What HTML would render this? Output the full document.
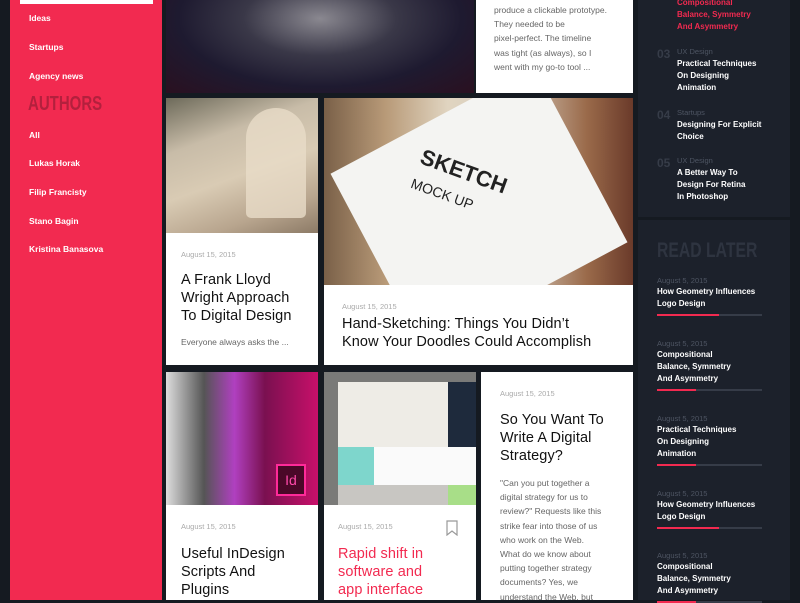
<!DOCTYPE html>
<html><head><meta charset="utf-8"><style>
*{margin:0;padding:0;box-sizing:border-box}
body{width:800px;height:600px;overflow:hidden;background:#151a21;font-family:"Liberation Sans",sans-serif;position:relative}
.abs{position:absolute}
.side{left:10px;top:0;width:152px;height:600px;background:#f22a50}
.side .it{position:absolute;left:19px;color:#fff;font-size:8.5px;font-weight:bold}
.auth{position:absolute;left:18px;top:93px;font-size:20px;font-weight:bold;color:#b3203d;transform:scaleX(.75);transform-origin:left}
.card{position:absolute;background:#fff;overflow:hidden}
.img{position:absolute;left:0;top:0;overflow:hidden}
.date{position:absolute;font-size:7.5px;color:#aaa}
.ttl{position:absolute;font-size:14.5px;line-height:18px;color:#111;letter-spacing:.1px}
.ex{position:absolute;font-size:8.5px;line-height:14.2px;color:#666}
.rp{left:638px;width:152px;background:#1c212b}
.num{position:absolute;left:19px;font-size:12px;color:#363c48;font-weight:bold}
.cat{position:absolute;left:39px;font-size:7.5px;color:#4e5563}
.rt{position:absolute;left:39px;font-size:8px;line-height:12px;color:#fff;font-weight:bold}
.rl{position:absolute;left:19px}
.rl .d{font-size:7.5px;color:#4e5563}
.rl .t{font-size:8px;line-height:12px;color:#fff;font-weight:bold;margin-top:1px}
.rl .bar{width:105px;height:2px;background:#363c48;margin-top:4px;position:relative}
.rl .bar i{position:absolute;left:0;top:0;height:2px;background:#f22a50}
</style></head><body>
<div class="abs side">
<div class="abs" style="left:10px;top:0;width:133px;height:4px;background:#fff"></div>
<div class="it" style="top:13px">Ideas</div>
<div class="it" style="top:42px">Startups</div>
<div class="it" style="top:71px">Agency news</div>
<div class="auth">AUTHORS</div>
<div class="it" style="top:130px">All</div>
<div class="it" style="top:158px">Lukas Horak</div>
<div class="it" style="top:187px">Filip Francisty</div>
<div class="it" style="top:216px">Stano Bagin</div>
<div class="it" style="top:244px">Kristina Banasova</div>
</div>

<div class="abs" style="left:166px;top:0;width:308px;height:93px;background:radial-gradient(ellipse at 50% 20%,#8a8890 0,#3a3848 35%,#1e1a30 65%,#2a1020 100%)"></div>
<div class="card" style="left:476px;top:0;width:157px;height:93px">
<div class="ex" style="left:18px;top:3px">produce a clickable prototype.<br>They needed to be<br>pixel-perfect. The timeline<br>was tight (as always), so I<br>went with my go-to tool ...</div></div>

<div class="card" style="left:166px;top:98px;width:152px;height:267px">
<div class="img" style="width:152px;height:135px;background:linear-gradient(160deg,#6d6a5a 0,#c8bca8 30%,#d9cbb4 55%,#b8a58e 80%,#8c7a66 100%)">
<div class="abs" style="left:80px;top:10px;width:60px;height:110px;background:#e8dcc8;border-radius:30px 30px 5px 5px;opacity:.8"></div></div>
<div class="date" style="left:15px;top:152px">August 15, 2015</div>
<div class="ttl" style="left:15px;top:173px">A Frank Lloyd<br>Wright Approach<br>To Digital Design</div>
<div class="ex" style="left:15px;top:237px">Everyone always asks the ...</div></div>

<div class="card" style="left:324px;top:98px;width:309px;height:267px">
<div class="img" style="width:309px;height:187px;background:linear-gradient(90deg,#7a6048 0,#b89a78 20%,#e0d4c0 40%,#d8cfc2 60%,#9a6a4a 85%,#6a3a2a 100%)">
<div class="abs" style="left:40px;top:10px;width:230px;height:200px;background:#f4f4f2;transform:rotate(-28deg)"></div>
<div class="abs" style="left:90px;top:60px;font-size:22px;font-weight:bold;color:#222;transform:rotate(20deg)">SKETCH<br><span style="font-size:14px;font-weight:normal">MOCK UP</span></div></div>
<div class="date" style="left:18px;top:204px">August 15, 2015</div>
<div class="ttl" style="left:18px;top:217px">Hand-Sketching: Things You Didn’t<br>Know Your Doodles Could Accomplish</div></div>

<div class="card" style="left:166px;top:372px;width:152px;height:228px">
<div class="img" style="width:152px;height:133px;background:linear-gradient(90deg,#ddd 0,#555 25%,#b040c0 45%,#7a1050 65%,#c8106a 100%)"></div>
<div class="abs" style="left:110px;top:92px;width:30px;height:32px;background:#4a0828;border:2px solid #ff2a9a;color:#ff4aaa;font-size:14px;text-align:center;line-height:28px">Id</div>
<div class="date" style="left:15px;top:150px">August 15, 2015</div>
<div class="ttl" style="left:15px;top:173px">Useful InDesign<br>Scripts And<br>Plugins</div></div>

<div class="card" style="left:324px;top:372px;width:152px;height:228px">
<div class="img" style="width:152px;height:133px;background:#7a7a78"></div>
<div class="abs" style="left:14px;top:10px;width:110px;height:65px;background:#eeece6"></div>
<div class="abs" style="left:124px;top:10px;width:28px;height:65px;background:#1e2a3c"></div>
<div class="abs" style="left:14px;top:75px;width:36px;height:38px;background:#7ed6cc"></div>
<div class="abs" style="left:50px;top:75px;width:102px;height:38px;background:#fafafa"></div>
<div class="abs" style="left:14px;top:113px;width:110px;height:20px;background:#c8c6c2"></div>
<div class="abs" style="left:124px;top:113px;width:28px;height:20px;background:#a8de88"></div>
<div class="date" style="left:14px;top:150px">August 15, 2015</div>
<svg class="abs" style="left:122px;top:148px" width="12" height="16"><path d="M1 1H11V15L6 11L1 15Z" fill="none" stroke="#999" stroke-width="1.2"/></svg>
<div class="ttl" style="left:14px;top:173px;color:#f22a50">Rapid shift in<br>software and<br>app interface</div></div>

<div class="card" style="left:481px;top:372px;width:152px;height:228px">
<div class="date" style="left:19px;top:17px">August 15, 2015</div>
<div class="ttl" style="left:19px;top:39px">So You Want To<br>Write A Digital<br>Strategy?</div>
<div class="ex" style="left:19px;top:104px">"Can you put together a<br>digital strategy for us to<br>review?" Requests like this<br>strike fear into those of us<br>who work on the Web.<br>What do we know about<br>putting together strategy<br>documents? Yes, we<br>understand the Web, but</div></div>

<div class="abs rp" style="top:0;height:217px">
<div class="rt" style="top:-3px;color:#f22a50">Compositional<br>Balance, Symmetry<br>And Asymmetry</div>
<div class="num" style="top:47px">03</div><div class="cat" style="top:47px">UX Design</div>
<div class="rt" style="top:58px">Practical Techniques<br>On Designing<br>Animation</div>
<div class="num" style="top:108px">04</div><div class="cat" style="top:108px">Startups</div>
<div class="rt" style="top:119px">Designing For Explicit<br>Choice</div>
<div class="num" style="top:156px">05</div><div class="cat" style="top:156px">UX Design</div>
<div class="rt" style="top:167px">A Better Way To<br>Design For Retina<br>In Photoshop</div>
</div>
<div class="abs rp" style="top:220px;height:380px">
<div class="abs" style="left:19px;top:19px;font-size:21px;font-weight:bold;color:#2e3440;transform:scaleX(.75);transform-origin:left;white-space:nowrap">READ LATER</div>
<div class="rl" style="top:56px"><div class="d">August 5, 2015</div><div class="t">How Geometry Influences<br>Logo Design</div><div class="bar"><i style="width:62px"></i></div></div>
<div class="rl" style="top:119px"><div class="d">August 5, 2015</div><div class="t">Compositional<br>Balance, Symmetry<br>And Asymmetry</div><div class="bar"><i style="width:39px"></i></div></div>
<div class="rl" style="top:194px"><div class="d">August 5, 2015</div><div class="t">Practical Techniques<br>On Designing<br>Animation</div><div class="bar"><i style="width:39px"></i></div></div>
<div class="rl" style="top:269px"><div class="d">August 5, 2015</div><div class="t">How Geometry Influences<br>Logo Design</div><div class="bar"><i style="width:62px"></i></div></div>
<div class="rl" style="top:331px"><div class="d">August 5, 2015</div><div class="t">Compositional<br>Balance, Symmetry<br>And Asymmetry</div><div class="bar"><i style="width:39px"></i></div></div>
</div>
</body></html>
